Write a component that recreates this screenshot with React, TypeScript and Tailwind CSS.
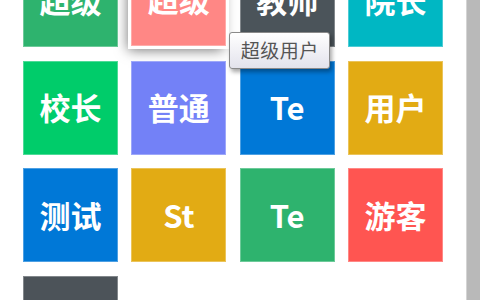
import React from 'react'

interface Tile {
  label: string
  color: string
  hovered?: boolean
}

const tiles: Tile[] = [
  { label: '超级', color: 'bg-[#2eb36e]' },
  { label: '超级', color: 'bg-[#ff8785]', hovered: true },
  { label: '教师', color: 'bg-[#4b545a]' },
  { label: '院长', color: 'bg-[#00b7c3]' },
  { label: '校长', color: 'bg-[#00cc6a]' },
  { label: '普通', color: 'bg-[#7381f7]' },
  { label: 'Te', color: 'bg-[#0078d7]' },
  { label: '用户', color: 'bg-[#e2ab14]' },
  { label: '测试', color: 'bg-[#0078d7]' },
  { label: 'St', color: 'bg-[#e2ab14]' },
  { label: 'Te', color: 'bg-[#2eb36e]' },
  { label: '游客', color: 'bg-[#ff5551]' },
  { label: '', color: 'bg-[#4c5359]' },
]

function UserTile({ tile }: { tile: Tile }) {
  return (
    <div className="relative h-[94px] w-[95px]">
      <div
        className={
          tile.hovered
            ? `flex h-full w-full -translate-y-[1px] items-center justify-center border border-white/30 ${tile.color} text-[31px] font-bold text-white shadow-[0_0_0_3px_#ffffff,-3px_4px_12px_rgba(0,0,0,0.55)]`
            : `flex h-full w-full items-center justify-center border border-white/30 ${tile.color} text-[31px] font-bold text-white`
        }
      >
        {tile.label}
      </div>
      {tile.hovered && (
        <div className="absolute left-[98px] top-[79px] z-10 flex h-[37px] w-[101px] items-center justify-center rounded-[3px] border border-[#8a8a8a] bg-gradient-to-b from-white to-[#e3e3ec] text-[19px] tracking-[0.5px] text-[#555555] shadow-[2px_3px_4px_rgba(0,0,0,0.35)]">
          超级用户
        </div>
      )}
    </div>
  )
}

export default function App() {
  return (
    <div
      className="flex h-[300px] w-[480px] overflow-hidden bg-white"
      style={{ fontFamily: '"Noto Sans CJK SC", "Noto Sans", sans-serif' }}
    >
      <div className="flex-1 overflow-hidden">
        <div className="-mt-[47px] grid grid-cols-[repeat(4,95px)] justify-center gap-x-[13.3px] gap-y-[13.7px]">
          {tiles.map((tile, i) => (
            <UserTile key={i} tile={tile} />
          ))}
        </div>
      </div>
      <div className="h-full w-[14px] border-l border-[#d4d4d4] bg-[#b9b9b9]" />
    </div>
  )
}
